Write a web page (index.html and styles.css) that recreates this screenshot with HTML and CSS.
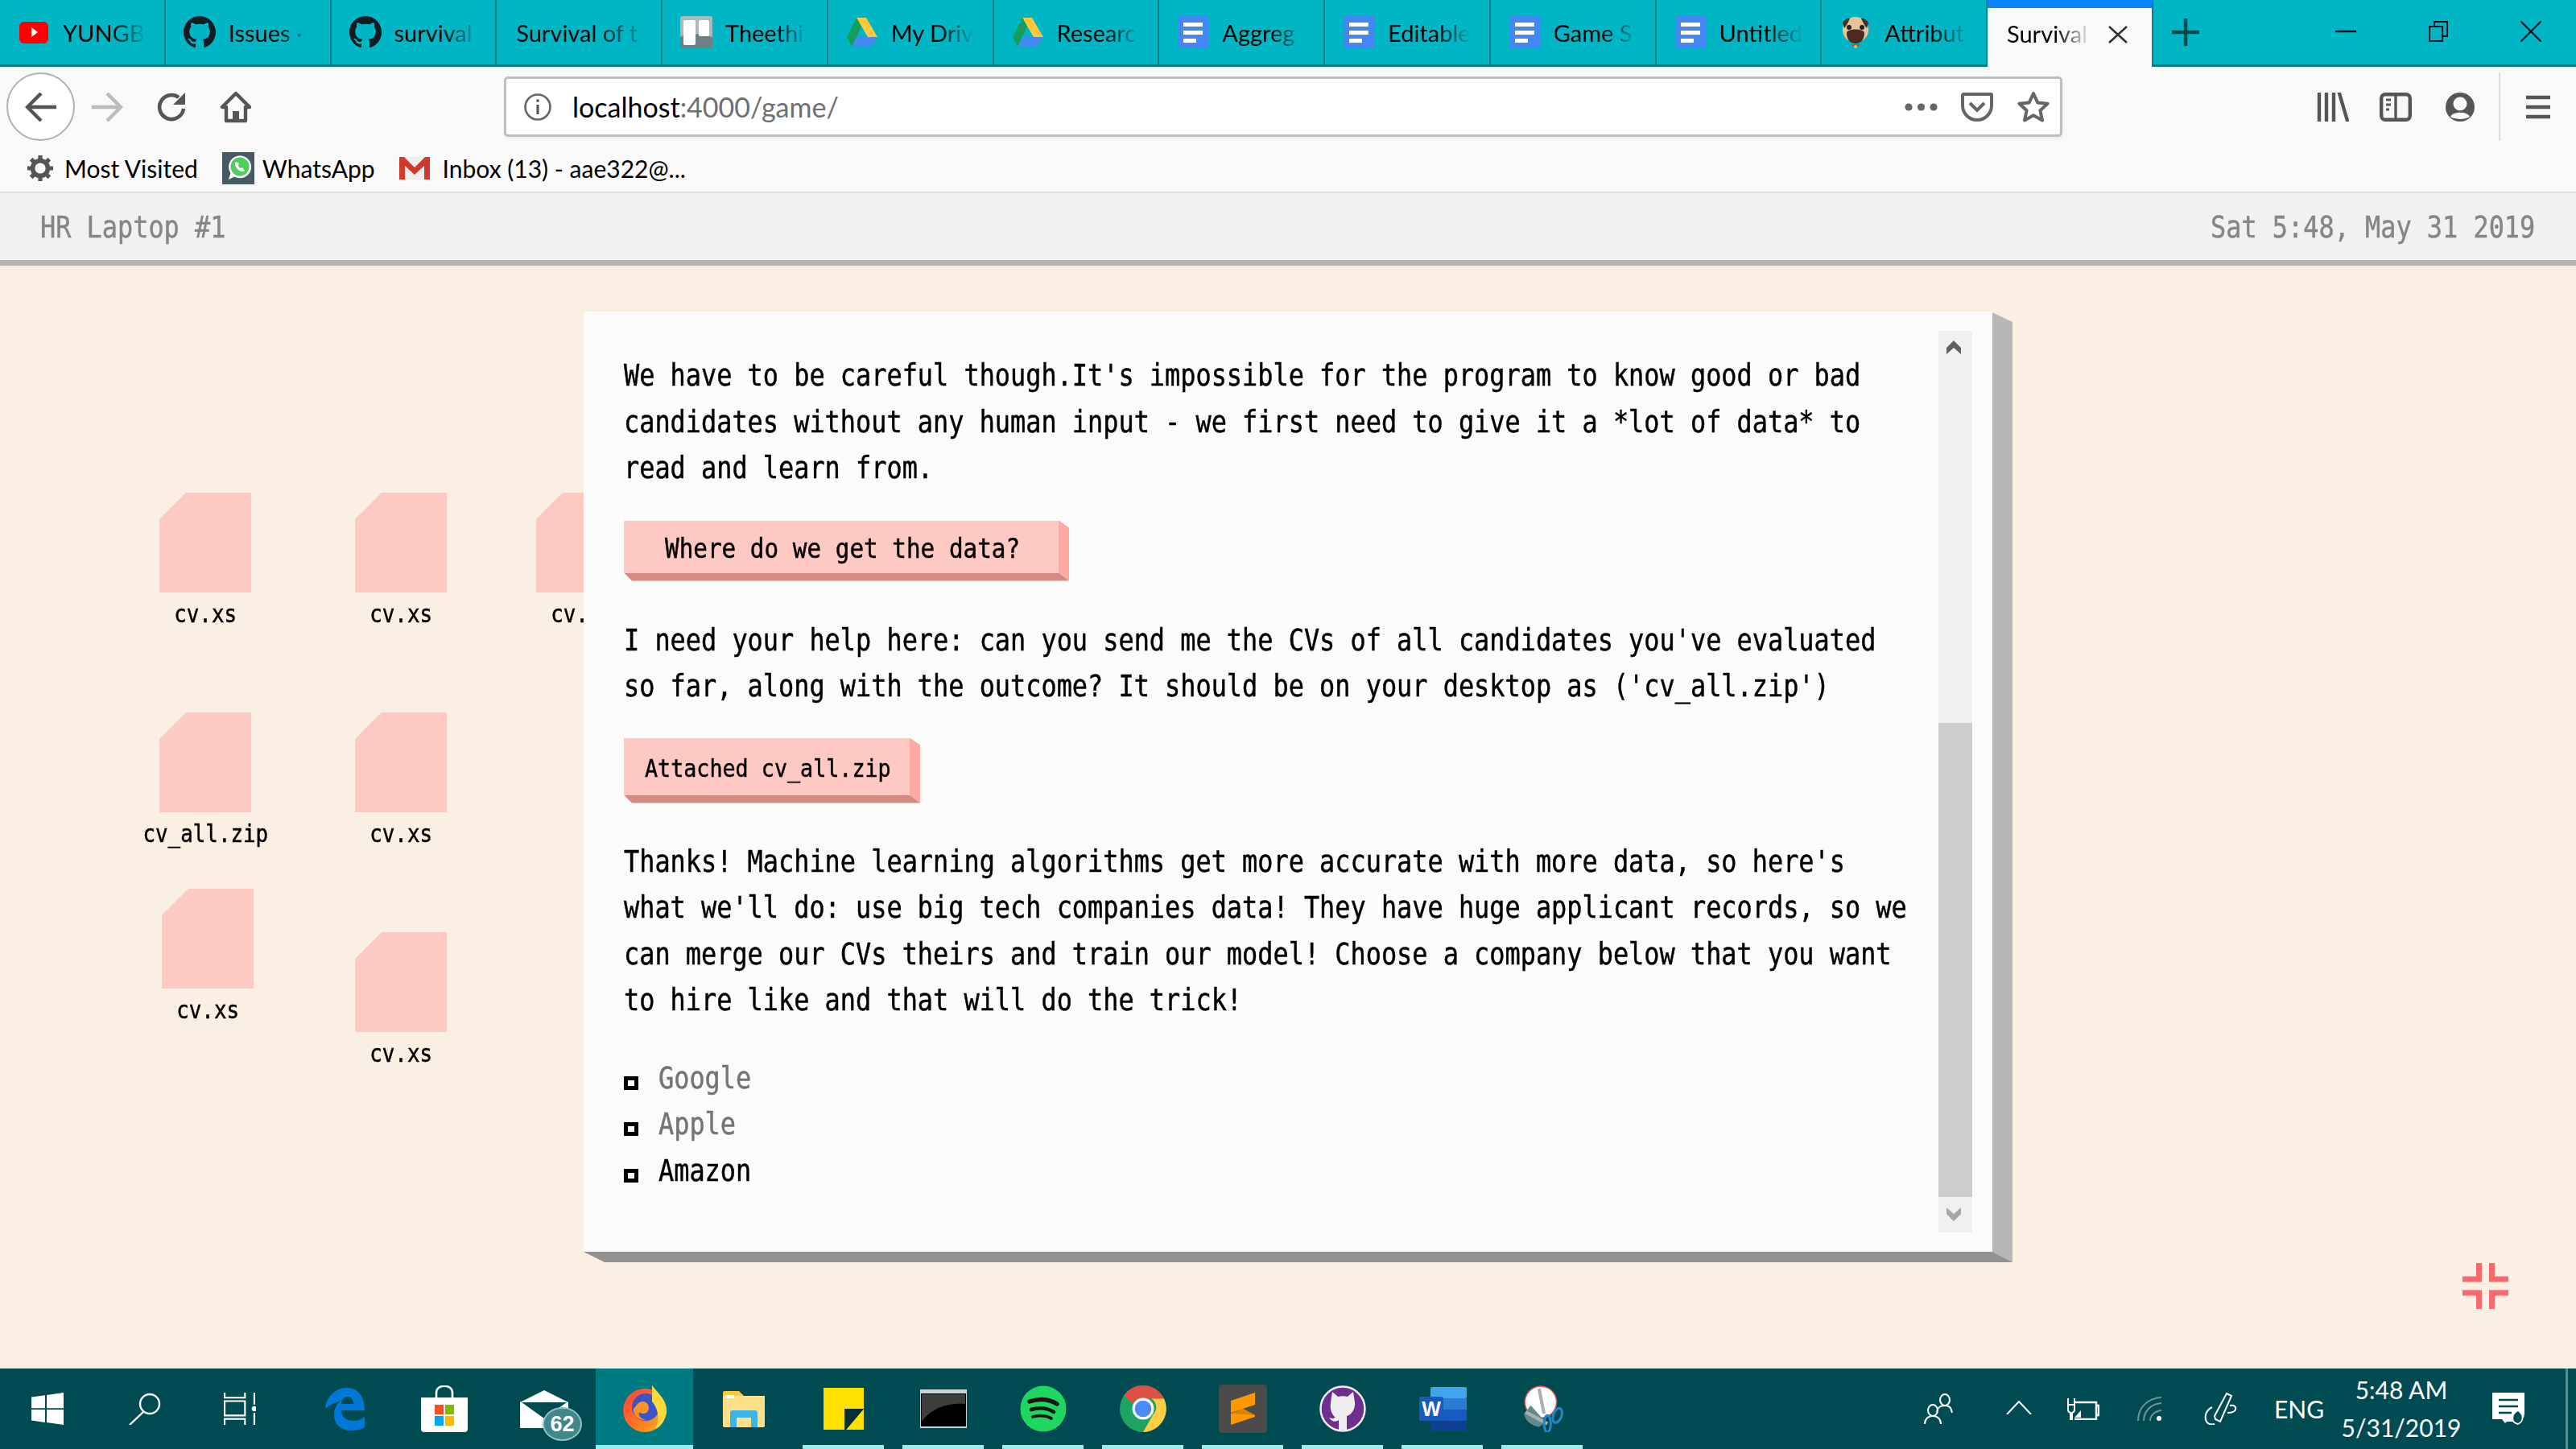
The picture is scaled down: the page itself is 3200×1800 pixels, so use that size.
FILE: index.html
```html
<!DOCTYPE html>
<html lang="en">
<head>
<meta charset="utf-8">
<title>Survival of the Best Fit</title>
<link rel="stylesheet" href="styles.css">
</head>
<body>
<svg class="defs" aria-hidden="true">
  <symbol id="gh" viewBox="0 0 16 16"><path fill="#161b1f" d="M8 0C3.58 0 0 3.58 0 8c0 3.54 2.29 6.53 5.47 7.59.4.07.55-.17.55-.38 0-.19-.01-.82-.01-1.49-2.01.37-2.53-.49-2.69-.94-.09-.23-.48-.94-.82-1.13-.28-.15-.68-.52-.01-.53.63-.01 1.08.58 1.23.82.72 1.21 1.87.87 2.33.66.07-.52.28-.87.51-1.07-1.78-.2-3.64-.89-3.64-3.95 0-.87.31-1.59.82-2.15-.08-.2-.36-1.02.08-2.12 0 0 .67-.21 2.2.82.64-.18 1.32-.27 2-.27.68 0 1.36.09 2 .27 1.53-1.04 2.2-.82 2.2-.82.44 1.1.16 1.92.08 2.12.51.56.82 1.27.82 2.15 0 3.07-1.87 3.75-3.65 3.95.29.25.54.73.54 1.48 0 1.07-.01 1.93-.01 2.2 0 .21.15.46.55.38A8.013 8.013 0 0016 8c0-4.42-3.58-8-8-8z"/></symbol>
  <symbol id="drive" viewBox="0 0 40 40"><path fill="#ffc93a" d="M13 2h12l14 24H27z"/><path fill="#169d5c" d="M13 2l6 11L7 38 1 26z"/><path fill="#4688f1" d="M14 26h25l-7 12H7z"/></symbol>
  <symbol id="doc" viewBox="0 0 38 40"><rect width="38" height="40" rx="3" fill="#4486f4"/><path fill="#fff" d="M7 8h24v5H7zM7 18h24v5H7zM7 28h16v5H7z"/></symbol>
</svg>

<div class="screen">
  <header class="tabstrip">
    <div class="tab">
      <svg class="fav" viewBox="0 0 36 40"><rect y="7" width="36" height="27" rx="6" fill="#f00"/><path d="M15 14l8 6-8 6z" fill="#fff"/></svg>
      <span class="tab-title">YUNGB</span>
    </div>
    <div class="tab"><svg class="fav"><use href="#gh"/></svg><span class="tab-title">Issues ·</span></div>
    <div class="tab"><svg class="fav"><use href="#gh"/></svg><span class="tab-title">survival</span></div>
    <div class="tab tab-plain"><span class="tab-title">Survival of t</span></div>
    <div class="tab">
      <svg class="fav" viewBox="0 0 40 40"><rect width="40" height="40" rx="3" fill="#a9b9bd"/><path d="M0 26c10-6 26-4 40 0v14H0z" fill="#6d8088"/><rect x="4" y="5" width="15" height="31" rx="2" fill="#fff"/><rect x="23" y="5" width="13" height="20" rx="2" fill="#fff"/></svg>
      <span class="tab-title">Theethi</span>
    </div>
    <div class="tab"><svg class="fav"><use href="#drive"/></svg><span class="tab-title">My Driv</span></div>
    <div class="tab"><svg class="fav"><use href="#drive"/></svg><span class="tab-title">Researc</span></div>
    <div class="tab"><svg class="fav"><use href="#doc"/></svg><span class="tab-title">Aggreg</span></div>
    <div class="tab"><svg class="fav"><use href="#doc"/></svg><span class="tab-title">Editable</span></div>
    <div class="tab"><svg class="fav"><use href="#doc"/></svg><span class="tab-title">Game S</span></div>
    <div class="tab"><svg class="fav"><use href="#doc"/></svg><span class="tab-title">Untitled</span></div>
    <div class="tab">
      <svg class="fav" viewBox="0 0 40 40"><circle cx="20" cy="17" r="16" fill="#e9c49a"/><path d="M4 8c3-5 8-6 9-5-2 4-4 9-7 12zM36 8c-3-5-8-6-9-5 2 4 4 9 7 12z" fill="#4a3128"/><path d="M9 21c0-6 22-6 22 0 0 9-5 13-11 13S9 30 9 21z" fill="#4a2a22"/><circle cx="12" cy="14" r="3" fill="#222"/><circle cx="28" cy="14" r="3" fill="#222"/><path d="M14 35h12l-3 3h-6z" fill="#e23b2e"/><circle cx="20" cy="38" r="2" fill="#f4c430"/></svg>
      <span class="tab-title">Attribut</span>
    </div>
    <div class="tab tab-active">
      <span class="tab-title">Survival</span>
      <svg class="tab-close" viewBox="0 0 24 22"><path d="M1 1l22 20M23 1L1 21" stroke="#333" stroke-width="2.6" fill="none"/></svg>
    </div>
    <svg class="newtab" viewBox="0 0 36 36"><path d="M18 1v34M1 18h34" stroke="#004a50" stroke-width="4.5"/></svg>
    <div class="winctl">
      <svg class="wc wc-min" viewBox="0 0 26 26"><path d="M0 13h26" stroke="#012" stroke-width="2.4"/></svg>
      <svg class="wc wc-res" viewBox="0 0 24 26"><path d="M1 7h16v18H1zM7 7V1h16v18h-6" stroke="#012" stroke-width="2.2" fill="none"/></svg>
      <svg class="wc wc-close" viewBox="0 0 26 26"><path d="M0 0l26 26M26 0L0 26" stroke="#012" stroke-width="2.2"/></svg>
    </div>
  </header>

  <nav class="navbar">
    <div class="backbtn">
      <svg class="ico40" viewBox="0 0 40 36"><path d="M20 1L3 18l17 17M3 18h36" fill="none" stroke="#555" stroke-width="4.4"/></svg>
    </div>
    <svg class="ico40 fwd" viewBox="0 0 40 36"><path d="M20 1l17 17-17 17M37 18H1" fill="none" stroke="#bbb" stroke-width="4.4"/></svg>
    <svg class="ico40 reload" viewBox="0 0 40 40"><path d="M34 22A15 15 0 1 1 28 8" fill="none" stroke="#555" stroke-width="4.6"/><path d="M36 2v15H21z" fill="#555"/></svg>
    <svg class="ico40 home" viewBox="0 0 40 40"><path d="M20 3L3 20h5v17h24V20h5z" fill="none" stroke="#555" stroke-width="4.4" stroke-linejoin="round"/><rect x="16" y="25" width="8" height="12" fill="#555"/></svg>
    <div class="urlbar">
      <svg class="info" viewBox="0 0 36 36"><circle cx="18" cy="18" r="15.5" fill="none" stroke="#666" stroke-width="2.6"/><path d="M16.4 15h3.2v12h-3.2zM16.4 8.5h3.2v3.2h-3.2z" fill="#555"/></svg>
      <div class="url">localhost<span class="url-dim">:4000/game/</span></div>
      <svg class="dots" viewBox="0 0 41 10"><circle cx="5" cy="5" r="4.6" fill="#666"/><circle cx="20.5" cy="5" r="4.6" fill="#666"/><circle cx="36" cy="5" r="4.6" fill="#666"/></svg>
      <svg class="pocket" viewBox="0 0 40 36"><path d="M3 2h34a1 1 0 0 1 1 1v13c0 10-8 18-18 18S2 26 2 16V3z" fill="none" stroke="#666" stroke-width="4"/><path d="M11 13l9 9 9-9" fill="none" stroke="#666" stroke-width="4"/></svg>
      <svg class="star" viewBox="0 0 40 40"><path d="M20 3l5.2 11.4 12.4 1.4-9.2 8.4 2.6 12.3L20 30.3 9 36.5l2.6-12.3-9.2-8.4 12.4-1.4z" fill="none" stroke="#666" stroke-width="4" stroke-linejoin="round"/></svg>
    </div>
    <div class="navright">
      <svg class="lib" viewBox="0 0 40 36"><path d="M3 1v34M12 1v34M21 1v34M28 1l10 34" stroke="#555" stroke-width="4.4" fill="none" stroke-linecap="round"/></svg>
      <svg class="side" viewBox="0 0 40 36"><rect x="2.2" y="2.2" width="35.6" height="31.6" rx="5" fill="none" stroke="#555" stroke-width="4.4"/><path d="M20 3v30" stroke="#555" stroke-width="3.4"/><path d="M8 9h6M8 15h6M8 21h4" stroke="#555" stroke-width="3"/></svg>
      <svg class="acct" viewBox="0 0 36 36"><circle cx="18" cy="18" r="18" fill="#555"/><circle cx="18" cy="14" r="8.5" fill="#f9f9f9"/><path d="M6 30c3-7 21-7 24 0-6 4-18 4-24 0z" fill="#f9f9f9"/></svg>
      <span class="navsep"></span>
      <svg class="menu" viewBox="0 0 30 30"><path d="M0 3h30M0 15h30M0 27h30" stroke="#555" stroke-width="4.6"/></svg>
    </div>
  </nav>

  <div class="bookmarks">
    <span class="bm bm-first">
      <svg class="bm-ico gear" viewBox="0 0 36 36"><circle cx="18" cy="18" r="10" fill="none" stroke="#555" stroke-width="6"/><path d="M18 1v8M18 27v8M1 18h8M27 18h8M6 6l6 6M24 24l6 6M30 6l-6 6M12 24l-6 6" stroke="#555" stroke-width="5.5"/></svg>
      Most Visited
    </span>
    <span class="bm">
      <svg class="bm-ico" viewBox="0 0 40 40"><rect width="40" height="40" fill="#455a64"/><path d="M8 34l2.4-8A14 14 0 1 1 15 30.4z" fill="#fff"/><circle cx="22" cy="18" r="11.5" fill="#4fce5d"/><path d="M17 12c-2 2-1 6 2 9s7 4 9 2l-3-4-2 1c-2-1-3-2-3-4l1-2z" fill="#fff"/></svg>
      WhatsApp
    </span>
    <span class="bm">
      <svg class="bm-ico gm" viewBox="0 0 38 28"><path d="M2 0h34a2 2 0 0 1 2 2v26H0V2z" fill="#eee"/><path d="M0 0h6l13 13L32 0h6v28h-7V11L19 22 7 11v17H0z" fill="#d0392b"/></svg>
      Inbox (13) - aae322@...
    </span>
  </div>

  <div class="statusbar">
    <span class="px status-t">HR Laptop #1</span>
    <span class="px status-t status-r">Sat 5:48, May 31 2019</span>
  </div>

  <main class="desk">
    <div class="file f1"><span class="file-page"></span><span class="px file-name">cv.xs</span></div>
    <div class="file f2"><span class="file-page"></span><span class="px file-name">cv.xs</span></div>
    <div class="file f3"><span class="file-page"></span><span class="px file-name">cv.xs</span></div>
    <div class="file f4"><span class="file-page"></span><span class="px file-name">cv_all.zip</span></div>
    <div class="file f5"><span class="file-page"></span><span class="px file-name">cv.xs</span></div>
    <div class="file f6"><span class="file-page"></span><span class="px file-name">cv.xs</span></div>
    <div class="file f7"><span class="file-page"></span><span class="px file-name">cv.xs</span></div>

    <section class="window">
      <div class="win-body">
        <p class="px para">We have to be careful though.It's impossible for the program to know good or bad<br>candidates without any human input - we first need to give it a *lot of data* to<br>read and learn from.</p>
        <div class="btn btn-a"><span class="px">Where do we get the data?</span></div>
        <p class="px para">I need your help here: can you send me the CVs of all candidates you've evaluated<br>so far, along with the outcome? It should be on your desktop as ('cv_all.zip')</p>
        <div class="btn btn-b"><span class="px">Attached cv_all.zip</span></div>
        <p class="px para">Thanks! Machine learning algorithms get more accurate with more data, so here's<br>what we'll do: use big tech companies data! They have huge applicant records, so we<br>can merge our CVs theirs and train our model! Choose a company below that you want<br>to hire like and that will do the trick!</p>
        <ul class="choices">
          <li class="choice dim"><span class="px">Google</span></li>
          <li class="choice dim"><span class="px">Apple</span></li>
          <li class="choice"><span class="px">Amazon</span></li>
        </ul>
      </div>
      <div class="scrollbar">
        <svg class="sb-up" viewBox="0 0 18 17"><path d="M9 0l9 9v8l-9-8-9 8V9z" fill="#606060"/></svg>
        <div class="sb-space"></div>
        <div class="sb-thumb"></div>
        <svg class="sb-down" viewBox="0 0 18 17"><path d="M9 17L0 8V0l9 8 9-8v8z" fill="#a6a6a6"/></svg>
      </div>
    </section>

    <svg class="compress" viewBox="0 0 57 57"><path d="M20.500 0v20H0M36.500 0v20H57M20.500 57V37H0M36.500 57V37H57" fill="none" stroke="#f96a6e" stroke-width="7"/></svg>
  </main>

  <footer class="taskbar">
    <div class="tb tb-first"><svg class="i40" viewBox="0 0 40 40"><path fill="#fff" d="M0 5.500l17-2.300v16H0zM19 3l21-3v19.200H19zM0 21h17v16L0 34.500zM19 21h21v19l-21-3z"/></svg></div>
    <div class="tb"><svg class="i40" viewBox="0 0 40 40"><circle cx="26" cy="14" r="12" fill="none" stroke="#fff" stroke-width="2.4"/><path d="M18 24L1 40" stroke="#fff" stroke-width="2.4"/></svg></div>
    <div class="tb"><svg class="i40 shift-l" viewBox="0 0 38 38"><g fill="none" stroke="#fff" stroke-width="2"><path d="M1 0v6h24V0M1 10h24v17H1zM1 38v-7h24v7M36 0v14M36 24v14"/></g><circle cx="36" cy="19" r="3" fill="#fff"/></svg></div>
    <div class="tb"><svg class="i-edge" viewBox="0 0 49 53"><path fill="#0078d7" d="M0 27C1 10 14 0 27 0c14 0 22 11 22 28H20c0 8 6 13 15 13 5 0 10-2 14-5v13c-5 3-11 4-17 4-13 0-21-8-21-20 0-7 3-13 9-17-8 2-15 6-22 11zm20-7h15c0-6-3-9-7-9-5 0-8 4-8 9z"/></svg></div>
    <div class="tb"><svg class="i58" viewBox="0 0 58 58"><path d="M19 16V9c0-11 20-11 20 0v7" fill="none" stroke="#fff" stroke-width="2.600"/><path fill="#fff" d="M0 15h58v39a4 4 0 0 1-4 4H4a4 4 0 0 1-4-4z"/><path fill="#f25022" d="M17 24h11v12H17z"/><path fill="#7fba00" d="M30 24h11v12H30z"/><path fill="#00a4ef" d="M17 38h11v12H17z"/><path fill="#ffb900" d="M30 38h11v12H30z"/></svg></div>
    <div class="tb tb-mail">
      <svg class="i-mail" viewBox="0 0 60 47"><path fill="#fff" d="M0 15L30 0l30 15v32H0z"/><path fill="#004b52" d="M2 15h56L30 35z"/></svg>
      <span class="badge">62</span>
    </div>
    <div class="tb tb-on tb-active">
      <svg class="i58" viewBox="0 0 58 58"><defs><linearGradient id="ffx" x1="0" y1="0" x2="1" y2="1"><stop offset="0" stop-color="#ff3e45"/><stop offset=".6" stop-color="#ff7a1c"/><stop offset="1" stop-color="#ffbd2e"/></linearGradient></defs><circle cx="29" cy="31" r="27" fill="url(#ffx)"/><circle cx="30" cy="27" r="17" fill="#3b55c9"/><path d="M38 0c6 8 20 20 18 34-2 10-8 18-14 20 6-12 4-24-4-34z" fill="#ffd93a"/><path d="M20 23c6-6 14-2 14 5 0 7-8 9-12 5-2 6 4 10 10 9-9 3-18-4-17-13z" fill="#ff9326"/></svg>
    </div>
    <div class="tb"><svg class="i-files" viewBox="0 0 52 45"><path fill="#ffc83d" d="M0 2a2 2 0 0 1 2-2h18l6 6H0z"/><path fill="#ffe08a" d="M0 6h52v37a2 2 0 0 1-2 2H2a2 2 0 0 1-2-2z"/><path fill="#3cb4e7" d="M9 45V27a3 3 0 0 1 3-3h28a3 3 0 0 1 3 3v18h-8V33H17v12z"/><rect x="3" y="5" width="11" height="4" fill="#fff"/></svg></div>
    <div class="tb tb-on"><svg class="i-sticky" viewBox="0 0 50 52"><path fill="#ffe100" d="M0 0h50v26H26v26H0z"/><path fill="#ffe100" d="M50 26L28 52h22z"/><path fill="#062e33" d="M26 26h24L28 52h-2z"/></svg></div>
    <div class="tb tb-on"><svg class="i-cmd" viewBox="0 0 58 48"><rect width="58" height="48" fill="#c9d5d8"/><rect x="1" y="5" width="56" height="41" fill="#000"/><path d="M2 6h54v12C30 16 12 26 2 40z" fill="#3d3d3d"/></svg></div>
    <div class="tb tb-on"><svg class="i58" viewBox="0 0 58 58"><circle cx="29" cy="29" r="28.500" fill="#1ed760"/><g fill="none" stroke="#191414" stroke-linecap="round"><path d="M12 20c12-4 24-3 34 3" stroke-width="5.500"/><path d="M14 30c10-3 20-2 28 3" stroke-width="4.500"/><path d="M16 39c8-2 16-2 23 2" stroke-width="3.800"/></g></svg></div>
    <div class="tb tb-on"><svg class="i58" viewBox="0 0 56 56"><circle cx="28" cy="28" r="28" fill="#1da462"/><path d="M28 0a28 28 0 0 1 25 16H28a12 12 0 0 0-12 6L5 12A28 28 0 0 1 28 0z" fill="#dd5144"/><path d="M53 16a28 28 0 0 1-25 40l12-21a12 12 0 0 0-2-19z" fill="#ffcd46"/><circle cx="28" cy="28" r="13" fill="#fff"/><circle cx="28" cy="28" r="10" fill="#4c8bf5"/></svg></div>
    <div class="tb tb-on"><svg class="i-subl" viewBox="0 0 60 60"><rect width="60" height="60" rx="4" fill="#4b4b4b"/><path fill="#ff9800" d="M15 20l30-10v15L15 35zM15 36l15-6 15 8v2L15 50z"/><path fill="#d98200" d="M15 36l15-6 15 8z"/></svg></div>
    <div class="tb tb-on"><svg class="i58" viewBox="0 0 58 58"><circle cx="29" cy="29" r="27.500" fill="#6e2f90" stroke="#eee" stroke-width="2.500"/><path fill="#eee" d="M16 8l7 6a22 22 0 0 1 12 0l7-6 2 13c1 9-5 16-10 17v17H24V43c-4 3-9 2-12-3 3 1 6 2 8 0-5-4-7-10-6-19z"/></svg></div>
    <div class="tb tb-on"><svg class="i-word" viewBox="0 0 59 55"><rect x="14" width="45" height="14" rx="2" fill="#41a5ee"/><rect x="14" y="14" width="45" height="14" fill="#2b7cd3"/><rect x="14" y="28" width="45" height="14" fill="#185abd"/><rect x="14" y="42" width="45" height="13" rx="2" fill="#103f91"/><rect y="12" width="30" height="30" rx="2" fill="#185abd"/><text x="15" y="36" class="w-letter">W</text></svg></div>
    <div class="tb tb-on"><svg class="i58" viewBox="0 0 56 56"><ellipse cx="26" cy="20" rx="19" ry="19" fill="#fff" stroke="#d9534f" stroke-width="1.500" transform="rotate(30 26 20)"/><path d="M6 34l8-10 18 20-8 6C14 48 7 42 6 34z" fill="#5f8b8e"/><path d="M24 4l6 30M8 32l26 14" stroke="#a9b0b3" stroke-width="4"/><g fill="none" stroke="#1f87c9" stroke-width="3"><ellipse cx="34" cy="46" rx="4" ry="10"/><ellipse cx="46" cy="36" rx="5" ry="9" transform="rotate(20 46 36)"/></g></svg></div>

    <div class="tray">
      <svg class="t-people" viewBox="0 0 36 38"><g fill="none" stroke="#fff" stroke-width="2"><ellipse cx="26" cy="8" rx="6" ry="7"/><path d="M16 23c1-6 4-8 10-8s8 3 9 9"/><ellipse cx="11" cy="21" rx="6" ry="7"/><path d="M1 38c0-6 4-10 10-10s10 4 10 10"/></g></svg>
      <svg class="t-chev" viewBox="0 0 32 17"><path d="M1 17L16 1l15 16" fill="none" stroke="#fff" stroke-width="2"/></svg>
      <svg class="t-batt" viewBox="0 0 41 27"><path d="M10 5h27v21H10M37 9h3v12h-3" fill="none" stroke="#fff" stroke-width="2.400"/><path d="M2 0v8h8V0M2 8v6a4 4 0 0 0 3 4v9h2v-9a4 4 0 0 0 3-4V8" fill="none" stroke="#fff" stroke-width="2"/><path d="M10 24h8v-9z" fill="#fff"/></svg>
      <svg class="t-wifi" viewBox="0 0 30 30"><g fill="none" stroke="#6c9599" stroke-width="2"><path d="M1 30C1 14 12 2 30 1"/><path d="M8 30C8 19 16 9 30 8"/><path d="M16 30c0-6 5-12 14-13"/></g><circle cx="27" cy="27" r="3" fill="#fff"/></svg>
      <svg class="t-pen" viewBox="0 0 41 40"><g fill="none" stroke="#fff" stroke-width="2"><path d="M28 1l6 3-14 32-6-3-1-4z"/><path d="M10 18C2 22 0 30 3 36c2 3 6 4 10 3"/><path d="M32 16c6-1 8 2 7 5s-5 4-10 4"/></g></svg>
      <span class="t-eng">ENG</span>
      <div class="t-clock"><span>5:48 AM</span><span>5/31/2019</span></div>
      <svg class="t-note" viewBox="0 0 40 40"><path fill="#fff" d="M0 0h40v26a10 10 0 0 1-10 10H18l-2 2-4-5H0z"/><path d="M8 9h24M8 17h24M8 25h16" stroke="#004b52" stroke-width="2.600"/><path d="M32 22c7 5 8 13 0 17-9-2-9-12 0-17z" fill="#004b52" stroke="#fff" stroke-width="1.800"/></svg>
      <span class="t-edge"></span>
    </div>
  </footer>
</div>
</body>
</html>
```

FILE: styles.css
```css
* { box-sizing: border-box; }
html, body { margin: 0; padding: 0; }
body { width: 3200px; height: 1800px; overflow: hidden; font-family: "Lato", "Noto Sans", sans-serif; color: #000; }
.defs { position: absolute; width: 0; height: 0; }
svg { display: block; flex: none; }

.screen { width: 3200px; height: 1800px; display: flex; flex-direction: column; }

/* tab strip */
.tabstrip { height: 83px; flex: none; display: flex; background: #00b6c4; border-bottom: 3px solid #00818a; }
.tab { width: 205.75px; height: 80px; flex: none; display: flex; align-items: center; padding: 0 0 0 22px; gap: 16px; border-right: 2px solid #007f88; font-size: 29px; color: #000; }
.tab-plain { padding-left: 24px; }
.tab-plain .tab-title { width: 165px; }
.tab-title { flex: none; width: 104px; white-space: nowrap; -webkit-mask-image: linear-gradient(90deg, #000 58%, transparent 100%); mask-image: linear-gradient(90deg, #000 58%, transparent 100%); }
.fav { width: 40px; height: 40px; }
.tab-active { height: 83px; background: #f9f9f9; border-top: 10px solid #0a84ff; border-right: 2px solid #007f88; padding: 0 0 0 24px; gap: 22px; margin-bottom: -3px; }
.tab-active .tab-title { margin-top: -10px; }
.tab-close { width: 24px; height: 22px; margin-top: -8px; }
.newtab { width: 36px; height: 36px; margin: 22px 0 0 22px; }
.winctl { margin-left: auto; display: flex; height: 80px; align-items: center; padding-right: 43px; }
.wc { width: 26px; height: 26px; margin-top: -2px; }
.wc-res { width: 24px; margin-left: 90px; }
.wc-close { margin-left: 90px; }

/* toolbar */
.navbar { height: 99px; flex: none; display: flex; align-items: center; background: #f9f9f9; }
.backbtn { width: 85px; height: 85px; margin-left: 8px; border-radius: 50%; border: 2px solid #b1b1b1; background: #fff; display: flex; align-items: center; justify-content: center; }
.ico40 { width: 40px; height: 36px; }
.fwd { margin-left: 20px; }
.reload { margin-left: 41px; height: 40px; }
.home { margin-left: 39px; height: 40px; }
.urlbar { width: 1936px; height: 75px; margin-left: 313px; display: flex; align-items: center; background: #fff; border: 3px solid #bebebe; border-radius: 5px; box-shadow: 0 2px 4px rgba(0,0,0,.06); padding: 0 13px 0 21px; }
.info { width: 36px; height: 36px; }
.url { margin-left: 25px; font-size: 34px; line-height: 1; white-space: nowrap; }
.url-dim { color: #6f6f6f; }
.dots { width: 41px; height: 10px; margin-left: auto; }
.pocket { width: 40px; height: 36px; margin-left: 29px; }
.star { width: 40px; height: 40px; margin-left: 30px; }
.navright { display: flex; align-items: center; margin-left: 316px; }
.lib { width: 40px; height: 36px; }
.side { width: 40px; height: 36px; margin-left: 38px; }
.acct { width: 36px; height: 36px; margin-left: 42px; }
.navsep { width: 2px; height: 85px; background: #dcdcdc; margin-left: 30px; }
.menu { width: 30px; height: 30px; margin-left: 32px; }

/* bookmarks */
.bookmarks { height: 58px; flex: none; display: flex; align-items: center; background: #f9f9f9; border-bottom: 2px solid #e0e0e0; font-size: 30px; padding-bottom: 2px; }
.bm { display: flex; align-items: center; gap: 10px; margin-left: 30px; white-space: nowrap; }
.bm-first { margin-left: 33px; gap: 13px; }
.bm-ico { width: 40px; height: 40px; }
.gear { width: 34px; height: 36px; }
.gm { width: 38px; height: 28px; margin-right: 6px; }

/* game status bar */
.statusbar { height: 90px; flex: none; display: flex; justify-content: space-between; align-items: center; padding: 0 0 0 50px; background: #f1f1f1; border-bottom: 7px solid #b3b3b3; }
.px { font-family: "DejaVu Sans Mono", "Liberation Mono", monospace; transform: scaleX(.862); transform-origin: 0 50%; white-space: pre; -webkit-text-stroke: .5px currentColor; }
.status-t { display: block; font-size: 37px; color: #868686; line-height: 1.2; margin-top: 3px; }
.status-r { width: 454px; }

/* desktop */
.desk { flex: 1; position: relative; background: #f9efe3; overflow: hidden; }
.file { position: absolute; width: 114px; display: flex; flex-direction: column; align-items: center; }
.f1 { left: 198px; top: 282px; }
.f2 { left: 441px; top: 282px; }
.f3 { left: 666px; top: 282px; }
.f4 { left: 198px; top: 555px; }
.f5 { left: 441px; top: 555px; }
.f6 { left: 201px; top: 774px; }
.f7 { left: 441px; top: 828px; }
.file-page { width: 114px; height: 124px; background: #fec8c3; clip-path: polygon(33px 0, 100% 0, 100% 100%, 0 100%, 0 33px); }
.file-name { margin-top: 9px; font-size: 30px; line-height: 36px; color: #000; transform-origin: 50% 50%; }

/* dialogue window */
.window { position: absolute; left: 725px; top: 57px; width: 1750px; height: 1168px; background: #fbfbfb; display: flex; }
.window::before { content: ""; position: absolute; left: 100%; top: 1px; width: 25px; height: 1180px; background: #b7b7b7; clip-path: polygon(0 0, 100% 12px, 100% 100%, 0 calc(100% - 13px)); }
.window::after { content: ""; position: absolute; left: 0; top: 100%; width: 1775px; height: 13px; background: #919191; clip-path: polygon(0 0, calc(100% - 25px) 0, 100% 100%, 26px 100%); }
.win-body { flex: 1; min-width: 0; padding: 51px 0 0 50px; }
.para { margin: 0; font-size: 37px; line-height: 57.5px; color: #000; }
.btn { position: relative; width: 540px; height: 65px; margin: 36px 0 55px; background: #fec8c3; display: flex; align-items: center; padding: 3px 0 0 51px; font-size: 34px; }
.btn::before { content: ""; position: absolute; left: 100%; top: 0; width: 13px; height: 75px; background: #fea9a1; clip-path: polygon(0 0, 100% 9px, 100% 100%, 0 calc(100% - 10px)); }
.btn::after { content: ""; position: absolute; left: 0; top: 100%; width: 553px; height: 10px; background: #d38a82; clip-path: polygon(0 0, calc(100% - 13px) 0, 100% 100%, 10px 100%); }
.btn-b { width: 355px; height: 71px; margin: 35px 0 54px; padding-left: 26px; font-size: 31px; }
.btn-b::after { width: 368px; }
.btn-b::before { height: 81px; }
.choices { list-style: none; margin: 39px 0 0; padding: 0; }
.choice { position: relative; height: 57.5px; display: flex; align-items: center; padding-left: 43px; font-size: 37px; color: #000; }
.choice::before { content: ""; box-sizing: border-box; position: absolute; left: 0; top: 26px; width: 18px; height: 17px; background: #fff; border: 5px solid #000; }
.dim { color: #747474; }

.scrollbar { width: 42px; height: 1120px; margin: 24px 25px 0 0; flex: none; background: #f0f0f0; display: flex; flex-direction: column; align-items: center; padding: 12px 0 14px; }
.sb-up, .sb-down { width: 18px; height: 17px; margin-right: 5px; }
.sb-space { height: 458px; flex: none; }
.sb-thumb { flex: 1; width: 100%; background: #cdcdcd; margin-bottom: 13px; margin-top: 0; }
.compress { position: absolute; left: 3059px; top: 1239px; width: 57px; height: 57px; }

/* taskbar */
.taskbar { height: 100px; flex: none; display: flex; align-items: center; background: #004b52; }
.tb { position: relative; width: 124px; height: 100px; flex: none; display: flex; align-items: center; justify-content: center; }
.tb-first { width: 118px; }
.tb-on::after { content: ""; position: absolute; left: 11px; right: 12px; bottom: 0; height: 5px; background: #9fe9ec; }
.tb-active { background: #007a82; width: 121px; margin: 0 1px 0 2px; }
.tb-active::after { left: 0; right: 0; }
.i40 { width: 40px; height: 40px; }
.shift-l { margin-right: 12px; }
.i-edge { width: 49px; height: 53px; }
.i58 { width: 58px; height: 58px; }
.i-mail { width: 60px; height: 47px; }
.badge { position: absolute; left: 60px; top: 48px; width: 49px; height: 42px; border-radius: 50%; background: #40868a; border: 2px solid #8fc0c3; color: #fff; font: 700 27px/38px "Liberation Sans", sans-serif; text-align: center; }
.i-files { width: 52px; height: 45px; }
.i-sticky { width: 50px; height: 52px; }
.i-cmd { width: 58px; height: 48px; }
.i-subl { width: 60px; height: 60px; }
.i-word { width: 59px; height: 55px; }
.w-letter { font: 700 25px "Liberation Sans", sans-serif; fill: #fff; text-anchor: middle; }

.tray { flex: 1; display: flex; align-items: center; height: 100px; color: #fff; position: relative; }
.t-people { width: 36px; height: 38px; margin-left: 412px; }
.t-chev { width: 32px; height: 17px; margin-left: 66px; margin-top: -4px; }
.t-batt { width: 41px; height: 27px; margin-left: 43px; }
.t-wifi { width: 30px; height: 30px; margin-left: 47px; }
.t-pen { width: 41px; height: 40px; margin-left: 53px; }
.t-eng { margin-left: 46px; width: 56px; font-size: 30px; line-height: 1; white-space: nowrap; }
.t-clock { margin-left: 34px; width: 136px; display: flex; flex-direction: column; align-items: center; font-size: 30px; line-height: 47px; white-space: nowrap; }
.t-note { width: 40px; height: 40px; margin-left: 45px; }
.t-edge { width: 3px; height: 100px; margin-left: 51px; background: #5d8a8e; }
```
